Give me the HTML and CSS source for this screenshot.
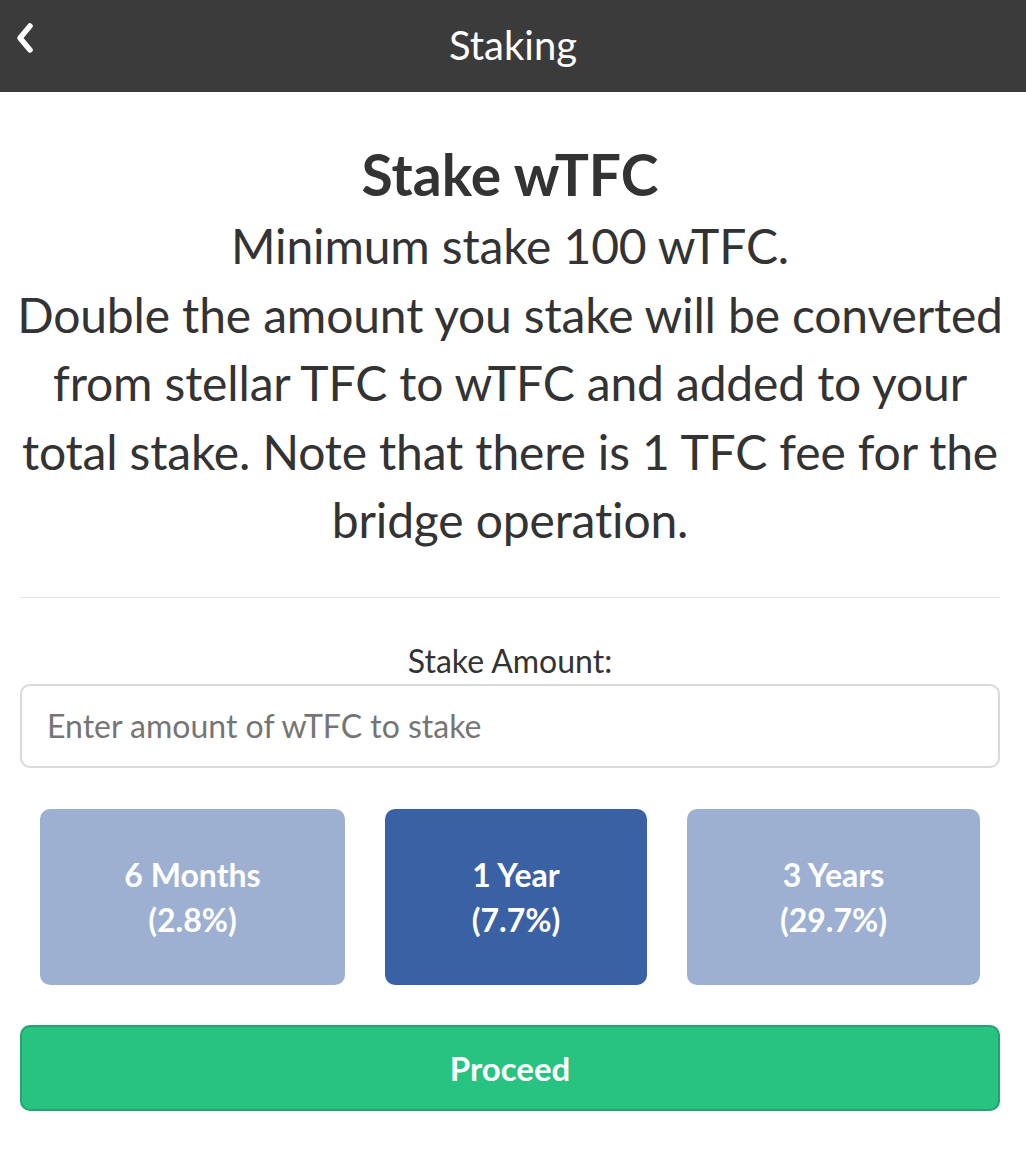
FILE: index.html
```html
<!DOCTYPE html>
<html>
<head>
<meta charset="utf-8">
<link rel="stylesheet" href="styles.css">
</head>
<body>
<header class="topbar">
  <button class="back" aria-label="Back">
    <svg width="20" height="32" viewBox="0 0 20 32"><path d="M15 4 L5 16 L15 28" fill="none" stroke="#fff" stroke-width="5.5" stroke-linecap="round" stroke-linejoin="round"/></svg>
  </button>
  <h1 class="topbar-title">Staking</h1>
</header>
<main class="content">
  <section class="intro">
    <h2 class="intro-title">Stake wTFC</h2>
    <p class="intro-text">Minimum stake 100 wTFC.<br>Double the amount you stake will be converted from stellar TFC to wTFC and added to your total stake. Note that there is 1 TFC fee for the bridge operation.</p>
  </section>
  <hr class="divider">
  <label class="field-label" for="amount">Stake Amount:</label>
  <input id="amount" class="field-input" type="text" placeholder="Enter amount of wTFC to stake">
  <div class="periods">
    <button class="period">6 Months<br>(2.8%)</button>
    <button class="period period-active">1 Year<br>(7.7%)</button>
    <button class="period">3 Years<br>(29.7%)</button>
  </div>
  <button class="proceed">Proceed</button>
</main>
</body>
</html>
```
FILE: styles.css
```css
* { box-sizing: border-box; }
html, body { margin: 0; padding: 0; background: #fff; }
body { font-family: Lato, "Open Sans", sans-serif; color: #333; }

.topbar {
  height: 92px;
  background: #3b3b3b;
  display: flex;
  align-items: center;
  justify-content: center;
  position: relative;
}
.back {
  position: absolute;
  left: 10px;
  top: 20px;
  background: none;
  border: 0;
  padding: 0;
  width: 30px;
  height: 36px;
  display: flex;
  align-items: center;
  justify-content: center;
}
.topbar-title {
  margin: 0;
  color: #fff;
  font-weight: 400;
  font-size: 40px;
  line-height: 1;
  padding-bottom: 2px;
}

.content {
  padding: 0 26px 0 20px;
  display: flex;
  flex-direction: column;
}
.intro { text-align: center; padding-top: 44px; margin: 0 -5px; }
.intro-title {
  margin: 0;
  font-size: 57px;
  font-weight: 700;
  line-height: 76px;
}
.intro-text {
  margin: 0;
  font-size: 48px;
  line-height: 68.5px;
  letter-spacing: -0.15px;
}
.divider {
  border: 0;
  border-top: 1px solid #e3e3e3;
  margin: 42px 0 0;
  width: 100%;
}
.field-label {
  text-align: center;
  font-size: 32px;
  margin-top: 47px;
  line-height: 32px;
}
.field-input {
  margin-top: 7px;
  height: 84px;
  border: 2px solid #d9d9d9;
  border-radius: 10px;
  padding: 0 25px;
  font-family: inherit;
  font-size: 32px;
  color: #333;
  width: 100%;
}
.field-input::placeholder { color: #757575; }

.periods {
  display: grid;
  grid-template-columns: 305px 262px 293px;
  column-gap: 40px;
  margin: 41px 0 0 20px;
}
.period {
  height: 176px;
  border: 0;
  border-radius: 10px;
  background: #9db0d2;
  color: #fff;
  font-family: inherit;
  font-weight: 700;
  font-size: 32px;
  line-height: 45px;
  padding: 0;
}
.period-active { background: #3b61a5; }

.proceed {
  margin-top: 40px;
  height: 86px;
  background: #28c281;
  border: 2px solid #23a36e;
  border-radius: 10px;
  color: #fff;
  font-family: inherit;
  font-weight: 700;
  font-size: 33px;
  width: 100%;
}
```
